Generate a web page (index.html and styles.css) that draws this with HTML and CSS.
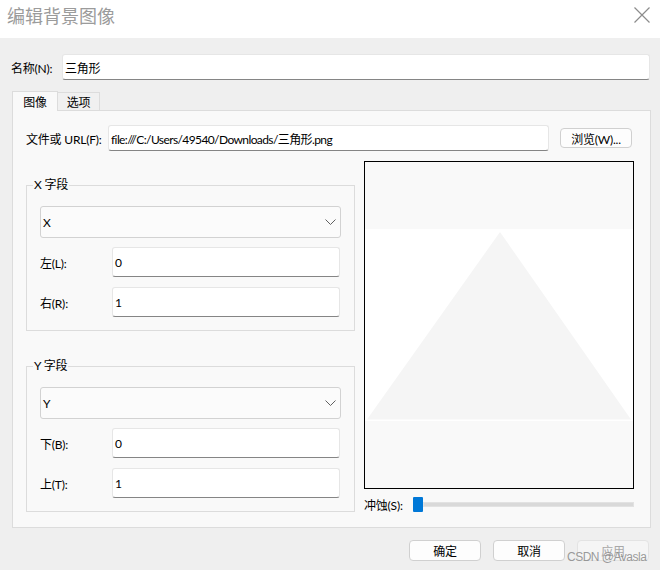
FILE: index.html
```html
<!DOCTYPE html>
<html lang="zh-CN">
<head>
<meta charset="utf-8">
<title>编辑背景图像</title>
<link rel="stylesheet" href="styles.css">
</head>
<body>
<div class="titlebar">
  <span class="title">编辑背景图像</span>
  <svg class="close" width="16" height="16" viewBox="0 0 16 16"><path d="M0.5 0.5 L15.5 15.5 M15.5 0.5 L0.5 15.5" stroke="#8c8c8c" stroke-width="1.2" fill="none"/></svg>
</div>
<div class="dialog">
  <div class="name-row">
    <span class="name-label">名称(N):</span>
    <div class="field name-field">三角形</div>
  </div>
  <div class="tabs">
    <div class="tab active">图像</div>
    <div class="tab inactive">选项</div>
  </div>
  <div class="panel">
    <div class="file-row">
      <span class="file-label">文件或 URL(F):</span>
      <div class="field file-field">file:///C:/Users/49540/Downloads/三角形.png</div>
      <div class="btn browse">浏览(W)...</div>
    </div>
    <div class="content">
      <div class="left">
        <div class="group">
          <span class="group-title">X 字段</span>
          <div class="combo"><span>X</span><svg width="11" height="6" viewBox="0 0 11 6"><path d="M0.5 0.5 L5.5 5.5 L10.5 0.5" stroke="#606060" stroke-width="1" fill="none"/></svg></div>
          <div class="row"><span class="row-label">左(L):</span><div class="field row-field">0</div></div>
          <div class="row"><span class="row-label">右(R):</span><div class="field row-field">1</div></div>
        </div>
        <div class="group">
          <span class="group-title">Y 字段</span>
          <div class="combo"><span>Y</span><svg width="11" height="6" viewBox="0 0 11 6"><path d="M0.5 0.5 L5.5 5.5 L10.5 0.5" stroke="#606060" stroke-width="1" fill="none"/></svg></div>
          <div class="row"><span class="row-label">下(B):</span><div class="field row-field">0</div></div>
          <div class="row"><span class="row-label">上(T):</span><div class="field row-field">1</div></div>
        </div>
      </div>
      <div class="right">
        <div class="preview">
          <svg width="268" height="326" viewBox="0 0 268 326">
            <rect x="0" y="0" width="268" height="326" fill="#f9f9f9"/>
            <rect x="0" y="67" width="268" height="192" fill="#ffffff"/>
            <polygon points="135,70 266,257.5 2,257.5" fill="#f5f5f5"/>
          </svg>
        </div>
        <div class="slider-row">
          <span class="slider-label">冲蚀(S):</span>
          <div class="thumb"></div>
          <div class="track"></div>
        </div>
      </div>
    </div>
  </div>
  <div class="buttons">
    <div class="btn">确定</div>
    <div class="btn">取消</div>
    <div class="btn disabled">应用</div>
  </div>
  <div class="watermark">CSDN @Avasla</div>
</div>
</body>
</html>
```
FILE: styles.css
```css
* { box-sizing: border-box; }
html, body { margin: 0; padding: 0; }
body {
  width: 660px;
  height: 570px;
  overflow: hidden;
  background: #efefef;
  font-family: Lato, "Noto Sans CJK SC", sans-serif;
  font-size: 12px;
  letter-spacing: -0.2px;
  color: #000;
}
.titlebar {
  height: 38px;
  background: #fff;
  display: flex;
  justify-content: space-between;
  align-items: flex-start;
  padding: 3px 10px 0 7px;
}
.title {
  font-family: "Noto Sans CJK SC", sans-serif;
  font-size: 18px;
  line-height: 24px;
  letter-spacing: 0;
  color: #9b9b9b;
}
.close { margin-top: 4px; display: block; }

.dialog { position: relative; height: 532px; padding-top: 16px; }

.name-row {
  display: flex;
  align-items: center;
  padding: 0 10px 0 11px;
  height: 26px;
}
.name-label { width: 51px; }
.field {
  background: #fff;
  border: 1px solid #e6e6e6;
  border-bottom-color: #858585;
  border-radius: 3px;
  display: flex;
  align-items: center;
  padding-left: 2px;
  white-space: nowrap;
  overflow: hidden;
}
.name-field { flex: 1; height: 26px; }
.file-field { letter-spacing: -0.6px; }

.tabs {
  display: flex;
  align-items: flex-end;
  height: 19px;
  margin: 11px 0 0 12px;
}
.tab {
  border: 1px solid #dcdcdc;
  border-bottom: none;
  display: flex;
  align-items: center;
  justify-content: center;
}
.tab.active {
  width: 46px;
  height: 20px;
  margin-bottom: -1px;
  background: #f9f9f9;
  position: relative;
  z-index: 1;
}
.tab.inactive {
  width: 42px;
  height: 18px;
  background: #f0f0f0;
  border-left: none;
}

.panel {
  margin: 0 9px 0 12px;
  height: 418px;
  background: #f9f9f9;
  border: 1px solid #dcdcdc;
  padding: 14px 16px 15px 13px;
}
.file-row {
  display: flex;
  align-items: center;
  height: 26px;
}
.file-label { width: 82px; }
.file-field { width: 441px; height: 26px; }
.btn {
  width: 72px;
  height: 21px;
  background: #fdfdfd;
  border: 1px solid #d0d0d0;
  border-radius: 4px;
  display: flex;
  align-items: center;
  justify-content: center;
}
.browse { margin-left: 11px; height: 20px; }

.content {
  display: flex;
  gap: 9px;
  margin-top: 10px;
}
.left {
  width: 329px;
  padding-top: 24px;
  display: flex;
  flex-direction: column;
  gap: 35px;
}
.group {
  height: 146px;
  border: 1px solid #dcdcdc;
  padding: 0 13px 13px 13px;
  display: flex;
  flex-direction: column;
}
.group-title {
  align-self: flex-start;
  margin: -9px 0 0 -7px;
  padding: 0 1px;
  line-height: 16px;
  height: 16px;
  background: #f9f9f9;
}
.combo {
  margin-top: 13px;
  height: 32px;
  background: #fbfbfb;
  border: 1px solid #d2d2d2;
  border-radius: 3px;
  display: flex;
  align-items: center;
  justify-content: space-between;
  padding: 0 4px 0 2px;
}
.combo svg { display: block; }
.row {
  display: flex;
  align-items: center;
  margin-top: 9px;
  height: 30px;
}
.row + .row { margin-top: 10px; }
.row-label { width: 72px; }
.row-field { width: 228px; height: 30px; }

.right {
  width: 270px;
  display: flex;
  flex-direction: column;
}
.preview {
  height: 328px;
  border: 1px solid #000;
}
.preview svg { display: block; }
.slider-row {
  display: flex;
  align-items: center;
  height: 15px;
  margin-top: 8px;
}
.slider-label { width: 49px; }
.thumb {
  width: 10px;
  height: 15px;
  background: #0078d7;
  border-radius: 1px;
}
.track {
  flex: 1;
  height: 5px;
  background: #d9d9d9;
  border: 1px solid #e2e2e2;
}

.buttons {
  display: flex;
  justify-content: flex-end;
  gap: 12px;
  margin: 12px 11px 0 0;
}
.btn.disabled {
  background: #f5f5f5;
  border-color: #e3e3e3;
  color: #a8a8a8;
}
.watermark {
  position: absolute;
  left: 567px;
  top: 512px;
  font-family: "Liberation Sans", Arial, sans-serif;
  font-size: 12px;
  letter-spacing: -0.5px;
  color: rgba(130, 130, 130, 0.8);
}
```
